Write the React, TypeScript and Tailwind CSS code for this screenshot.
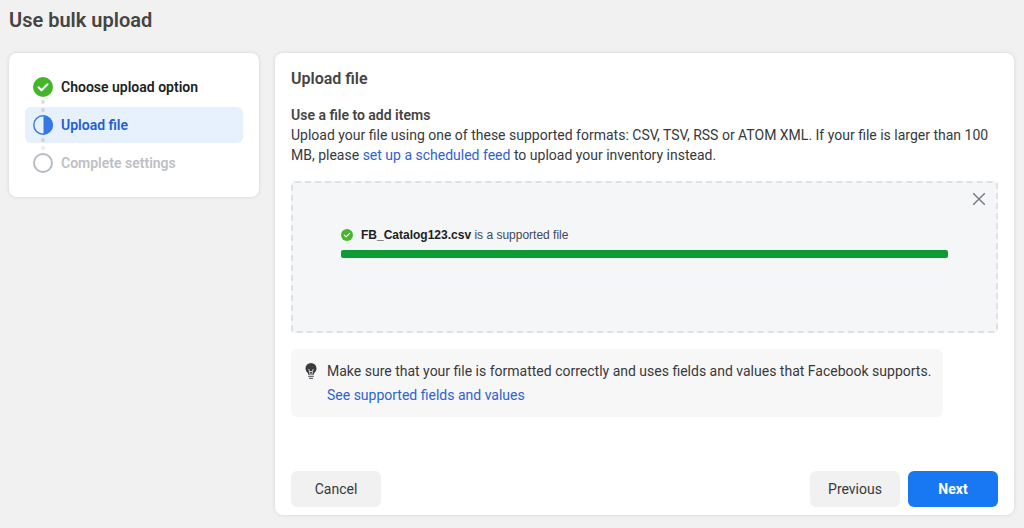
import clsx from "clsx";

type StepState = "done" | "current" | "todo";

const steps: { label: string; state: StepState }[] = [
  { label: "Choose upload option", state: "done" },
  { label: "Upload file", state: "current" },
  { label: "Complete settings", state: "todo" },
];

function CheckCircle({ className }: { className: string }) {
  return (
    <svg viewBox="0 0 20 20" className={className} aria-hidden="true">
      <circle cx="10" cy="10" r="10" fill="#42b72a" />
      <path
        d="M5.5 10.2l3 3 6-6"
        fill="none"
        stroke="#fff"
        strokeWidth="2"
        strokeLinecap="round"
        strokeLinejoin="round"
      />
    </svg>
  );
}

function StepIcon({ state }: { state: StepState }) {
  if (state === "done") {
    return <CheckCircle className="size-5 shrink-0" />;
  }

  if (state === "current") {
    return (
      <svg viewBox="0 0 20 20" className="size-5 shrink-0" aria-hidden="true">
        <circle cx="10" cy="10" r="9.2" fill="#e7f0fd" stroke="#3578e5" strokeWidth="1.4" />
        <path d="M10.5 0.5a9.5 9.5 0 0 1 0 19z" fill="#3578e5" />
      </svg>
    );
  }

  return (
    <svg viewBox="0 0 20 20" className="size-5 shrink-0" aria-hidden="true">
      <circle cx="10" cy="10" r="9" fill="#fff" stroke="#b8bbc0" strokeWidth="2" />
    </svg>
  );
}

function Sidebar() {
  return (
    <nav className="w-[250px] shrink-0 rounded-lg bg-white p-4 shadow-[0_0_4px_rgba(0,0,0,0.12)]">
      <ol className="flex flex-col gap-0.5">
        {steps.map((step, i) => (
          <li
            key={step.label}
            className={clsx(
              "relative flex h-9 items-center gap-2 rounded-md px-2 font-semibold",
              step.state === "done" && "text-[#1c1e21]",
              step.state === "current" && "bg-[#e7f0fd] text-[#2160d3]",
              step.state === "todo" && "text-[#bec0c3]"
            )}
          >
            <StepIcon state={step.state} />
            {step.label}

            {/* dots down to the next step */}
            {i < steps.length - 1 && (
              <span className="absolute top-[31px] left-4 z-10 flex flex-col gap-1">
                <span className={clsx("size-1 rounded-full", i === 0 ? "bg-[#dddfe2]" : "bg-[#cbd5e2]")} />
                <span className={clsx("size-1 rounded-full", i === 0 ? "bg-[#cbd5e2]" : "bg-[#ebedf0]")} />
              </span>
            )}
          </li>
        ))}
      </ol>
    </nav>
  );
}

function DropZone() {
  return (
    <div className="mt-4 rounded-sm border-2 border-dashed border-[#dfe1e4] bg-[#f5f6f8] pt-2 pb-[73px]">
      <div className="flex justify-end pr-[9px]">
        <button type="button" aria-label="Remove file" className="size-4">
          <svg viewBox="0 0 16 16" className="size-4" aria-hidden="true">
            <path d="M2.2 2.2l11.6 11.6M13.8 2.2L2.2 13.8" stroke="#75787d" strokeWidth="1.4" fill="none" />
          </svg>
        </button>
      </div>

      <div className="mt-5 px-12">
        <p className="flex items-center gap-2 font-['Liberation_Sans',sans-serif] text-xs leading-4 text-[#444950]">
          <CheckCircle className="size-3 shrink-0" />
          <span>
            <b className="text-[#1c1e21]">FB_Catalog123.csv</b> is a supported file
          </span>
        </p>
        <div
          role="progressbar"
          aria-label="File upload"
          aria-valuenow={100}
          className="mt-[7px] h-2 rounded-xs bg-[#0d9b34]"
        />
      </div>
    </div>
  );
}

function Tip() {
  return (
    <div className="mt-4 flex w-fit gap-2.5 rounded-md bg-[#f7f7f7] py-2.5 pr-3 pl-3.5 leading-6">
      <svg viewBox="0 0 12 16" className="mt-1 h-4 w-3 shrink-0" aria-hidden="true">
        <path
          d="M6 0A5.5 5.5 0 0 0 .5 5.5c0 2 1 3.3 2 4.3.5.5.7 1.2.8 2h5.4c.1-.8.3-1.5.8-2 1-1 2-2.3 2-4.3A5.5 5.5 0 0 0 6 0z"
          fill="#3a3c40"
        />
        <path d="M3.8 6l1.400 5.800M8.2 6l-1.400 5.800M5 8l1 1 1-1" stroke="#e4e4e4" strokeWidth="0.9" fill="none" />
        <path d="M3.2 13.4h5.600M4 15.400h4" stroke="#6a6c70" strokeWidth="1.1" fill="none" />
      </svg>
      <div>
        <p>Make sure that your file is formatted correctly and uses fields and values that Facebook supports.</p>
        <a href="#" className="text-[#2e62cf]">
          See supported fields and values
        </a>
      </div>
    </div>
  );
}

export default function App() {
  return (
    <div className="min-h-screen bg-[#f1f1f1] pt-2 pr-2.5 pb-3 pl-[9px] font-[Roboto,sans-serif] text-sm leading-5 text-[#37393d]">
      <h1 className="text-xl leading-6 font-semibold text-[#444444]">Use bulk upload</h1>

      <div className="mt-[21px] flex items-start gap-4">
        <Sidebar />

        <main className="min-w-0 flex-1 rounded-lg bg-white px-4 pt-4 pb-2 shadow-[0_0_4px_rgba(0,0,0,0.12)]">
          <h2 className="text-base leading-5 font-semibold text-[#444444]">Upload file</h2>

          <h3 className="mt-4 font-semibold text-[#444444]">Use a file to add items</h3>
          <p>
            Upload your file using one of these supported formats: CSV, TSV, RSS or ATOM XML. If your file is larger
            than 100 MB, please{" "}
            <a href="#" className="text-[#2e62cf]">
              set up a scheduled feed
            </a>{" "}
            to upload your inventory instead.
          </p>

          <DropZone />
          <Tip />

          <div className="mt-[54px] flex gap-2">
            <button type="button" className="mr-auto h-9 min-w-[90px] rounded-md bg-[#f1f1f1] px-4">
              Cancel
            </button>
            <button type="button" className="h-9 min-w-[90px] rounded-md bg-[#f1f1f1] px-4">
              Previous
            </button>
            <button type="button" className="h-9 min-w-[90px] rounded-md bg-[#1877f2] px-4 font-bold text-white">
              Next
            </button>
          </div>
        </main>
      </div>
    </div>
  );
}
